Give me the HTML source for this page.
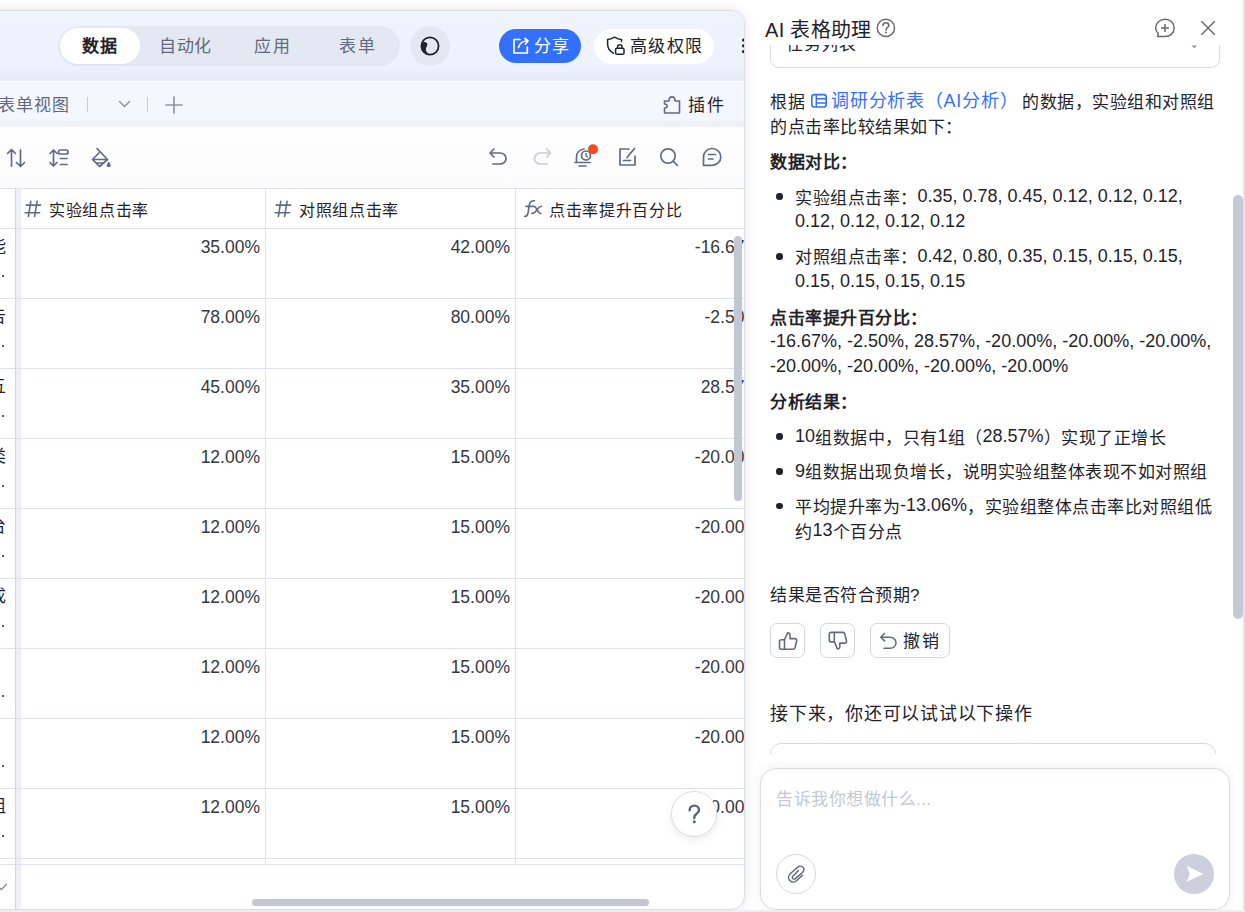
<!DOCTYPE html>
<html lang="zh-CN"><head><meta charset="utf-8">
<style>
*{box-sizing:border-box;margin:0;padding:0}
html,body{width:1245px;height:912px;overflow:hidden;background:#ffffff;font-family:"Liberation Sans",sans-serif;color:#1f2329}
.a{position:absolute;white-space:nowrap}
#panel{position:absolute;left:-50px;top:10px;width:795px;height:900px;border:1px solid #dadce6;border-radius:14px;overflow:hidden;background:#fff;box-shadow:0 0 12px rgba(20,20,40,0.10)}
#pin{position:absolute;left:49px;top:-11px;width:1245px;height:912px}
.t{font-size:17px;line-height:25px;letter-spacing:0.5px}
.g{color:#62687e}
svg{position:absolute;overflow:visible}
.ic{fill:none;stroke:#646a85;stroke-width:1.7;stroke-linecap:round;stroke-linejoin:round}
.hl{position:absolute;height:1px;background:#dfe1ea}
.vl{position:absolute;width:1px;background:#dfe1ea}
.l{font-size:18px;position:relative;top:-1.5px;line-height:1;letter-spacing:0}
.num{position:absolute;font-size:17.5px;line-height:25px;text-align:right;white-space:nowrap;color:#35383e}
#ai{position:absolute;left:745px;top:0;width:500px;height:912px}
</style></head><body>

<div id="panel"><div id="pin">
  <!-- header band -->
  <div class="a" style="left:0;top:11px;width:760px;height:70px;background:linear-gradient(#eff3fc 0,#eef2fc 55px,#e6eaf5 70px)"></div>
  <div class="hl" style="left:0;top:81px;width:760px;background:#fdfeff"></div>
  <!-- segmented -->
  <div class="a" style="left:58px;top:26px;width:342px;height:40px;border-radius:20px;background:#e4e8f2"></div>
  <div class="a" style="left:60px;top:28px;width:80px;height:36px;border-radius:18px;background:#fff;box-shadow:0 1px 2px rgba(0,0,0,0.04)"></div>
  <div class="a t" style="left:82px;top:34px;font-weight:bold;color:#1f2329">数据</div>
  <div class="a t g" style="left:159px;top:34px">自动化</div>
  <div class="a t g" style="left:254px;top:34px;letter-spacing:1.5px">应用</div>
  <div class="a t g" style="left:339px;top:34px;letter-spacing:1.5px">表单</div>
  <!-- theme button -->
  <div class="a" style="left:410px;top:26px;width:40px;height:40px;border-radius:20px;background:#e4e8f2"></div>
  <svg style="left:0;top:0" width="1" height="1"><circle cx="430" cy="46" r="8.6" fill="none" stroke="#1f2329" stroke-width="1.8"/><path d="M421.4 45.5 C421.3 43.2 423 41.8 424.9 42 C426.7 42.2 427.8 43.9 427.2 45.6 C426.7 47 425.6 48.2 425.9 50.1 C426.1 51.5 427.1 52.6 428.6 53.4 C424.6 53.2 421.6 50 421.4 45.5 Z" fill="#1f2329"/></svg>
  <!-- share -->
  <div class="a" style="left:499px;top:29px;width:82px;height:34px;border-radius:17px;background:#3370ff"></div>
  <svg style="left:0;top:0" width="1" height="1"><path d="M520 39.5 H514 V53 H527.3 V47" fill="none" stroke="#fff" stroke-width="1.7" stroke-linecap="round" stroke-linejoin="round"/><path d="M518.5 47.5 C519.5 43.5 522.5 41 527.5 41 M525 38.5 L528 41 L525.5 44" fill="none" stroke="#fff" stroke-width="1.7" stroke-linecap="round" stroke-linejoin="round"/></svg>
  <div class="a t" style="left:534px;top:34px;color:#fff">分享</div>
  <!-- permission -->
  <div class="a" style="left:594px;top:29px;width:120px;height:35px;border-radius:17.5px;background:#fff"></div>
  <svg style="left:0;top:0" width="1" height="1"><path d="M613.5 53.3 C609.5 51 607.6 48 607.6 44 V39.5 C610.5 39.5 612.5 38.5 614.6 37.2 C616.6 38.5 619 39.5 621.5 39.5 V41.5" fill="none" stroke="#1f2329" stroke-width="1.5" stroke-linecap="round" stroke-linejoin="round"/><rect x="615.6" y="48.3" width="8.4" height="6" rx="1.3" fill="none" stroke="#1f2329" stroke-width="1.5"/><path d="M617.6 48.3 V46.5 C617.6 44 622 44 622 46.5 V48.3" fill="none" stroke="#1f2329" stroke-width="1.5"/></svg>
  <div class="a t" style="left:630px;top:34px;letter-spacing:1.3px">高级权限</div>
  <!-- kebab -->
  <svg style="left:0;top:0" width="1" height="1"><circle cx="743.5" cy="40" r="1.6" fill="#1f2329"/><circle cx="743.5" cy="45.8" r="1.6" fill="#1f2329"/><circle cx="743.5" cy="51.6" r="1.6" fill="#1f2329"/></svg>

  <!-- view bar -->
  <div class="a" style="left:0;top:82px;width:760px;height:45px;background:linear-gradient(#f4f7fd 0,#f4f7fd 36px,#eceef4 44px,#f4f5f8 45px)"></div>
  <div class="a t g" style="left:-2px;top:93px;letter-spacing:1px">表单视图</div>
  <div class="vl" style="left:87px;top:97px;height:15px;background:#c9ccd6"></div>
  <svg style="left:0;top:0" width="1" height="1"><path class="ic" style="stroke:#8f95a3;stroke-width:1.5" d="M119.5 101.5 L124.5 106.5 L129.5 101.5"/></svg>
  <div class="vl" style="left:147px;top:97px;height:15px;background:#c9ccd6"></div>
  <svg style="left:0;top:0" width="1" height="1"><path class="ic" style="stroke:#8f95a3;stroke-width:1.7" d="M174 97 V113 M166 105 H182"/></svg>
  <svg style="left:0;top:0" width="1" height="1"><path class="ic" style="stroke-width:1.6" d="M664.5 101 H669 C669 95.5 675 95.5 675 101 H679.5 V113 H664.5 V108 C668 108 668 104 664.5 104 Z"/></svg>
  <div class="a t" style="left:688px;top:93px;letter-spacing:1.5px">插件</div>

  <!-- toolbar -->
  <div class="a" style="left:0;top:127px;width:760px;height:61px;background:linear-gradient(#fefefe 0,#fdfdfe 30px,#fbfbfd 61px)"></div>
  <svg style="left:0;top:0" width="1" height="1">
    <path class="ic" d="M11.5 166 V149.5 M7.5 153.5 L11.5 149.5 L15.5 153.5 M20.5 150 V166.5 M16.5 162.5 L20.5 166.5 L24.5 162.5"/>
    <path class="ic" d="M53.5 150 V166 M50 153.5 L53.5 150 L57 153.5 M50 162.5 L53.5 166 L57 162.5 M60.5 150 H66 A1.5 1.5 0 0 1 66 154 H60.5 A1.5 1.5 0 0 1 60.5 150 Z M60.5 158.5 H67 M60.5 164.5 H67"/>
    <path class="ic" d="M97 148.5 L107.5 159.5 L99.5 166.5 L92.5 159.5 L99 153 M93 159.5 H107 M96.5 163 H104"/>
    <path d="M108.7 161.5 C107.2 163.5 106.5 165 106.7 166 C107 167.3 110.4 167.3 110.7 166 C110.9 165 110.2 163.5 108.7 161.5 Z" fill="#646a85"/>
  </svg>
  <svg style="left:0;top:0" width="1" height="1">
    <path class="ic" d="M494 149 L490 153 L494 157 M490.5 153 H500 C503.5 153 506 155.5 506 158.5 C506 161.5 503.5 164 500 164 H493"/>
    <path class="ic" style="stroke:#c9ccd6" d="M546.5 149 L550.5 153 L546.5 157 M550 153 H540.5 C537 153 534.5 155.5 534.5 158.5 C534.5 161.5 537 164 540.5 164 H547.5"/>
    <path class="ic" d="M584 149 C579 149.5 576.5 153 576.5 157 V162.5 H575 M575 162.5 H590 M579 166 H586"/>
    <circle class="ic" cx="586" cy="155.5" r="4.5"/><path class="ic" style="stroke-width:1.4" d="M586 153.5 V156 L587.8 157"/>
    <circle cx="593" cy="149.3" r="5" fill="#f54a1f"/>
    <path class="ic" d="M629 149 H620 V165 H635 V156 M623.5 160.5 H630.5 M634.5 148.5 L627 157.5"/>
    <circle class="ic" cx="668" cy="156" r="7.2"/><path class="ic" d="M673.3 161.3 L677.5 165.5"/>
    <path class="ic" d="M712 148.5 C716.8 148.5 720.8 152.3 720.8 157 C720.8 161.7 716.8 165.3 712 165.3 H703.5 V157 C703.5 152.3 707.3 148.5 712 148.5 Z M708.5 154.5 H715.5 M708.5 159 H713"/>
  </svg>

  <!-- table -->
  <div class="a" style="left:16px;top:188px;width:5px;height:722px;background:#eff0f5"></div>
  <div class="hl" style="left:0;top:188px;width:760px"></div>
  <div class="hl" style="left:0;top:228px;width:760px"></div>
  <div class="hl" style="left:0;top:298px;width:760px"></div>
  <div class="hl" style="left:0;top:368px;width:760px"></div>
  <div class="hl" style="left:0;top:438px;width:760px"></div>
  <div class="hl" style="left:0;top:508px;width:760px"></div>
  <div class="hl" style="left:0;top:578px;width:760px"></div>
  <div class="hl" style="left:0;top:648px;width:760px"></div>
  <div class="hl" style="left:0;top:718px;width:760px"></div>
  <div class="hl" style="left:0;top:788px;width:760px"></div>
  <div class="hl" style="left:0;top:858px;width:760px"></div>
  <div class="hl" style="left:0;top:864px;width:760px"></div>
  <div class="vl" style="left:15px;top:188px;height:722px;background:#d3d6e2"></div>
  <div class="vl" style="left:265px;top:188px;height:676px"></div>
  <div class="vl" style="left:515px;top:188px;height:676px"></div>

  <!-- header -->
  <svg style="left:0;top:0" width="1" height="1"><path class="ic" style="stroke-width:1.6" d="M30.8 201.3 L28.4 216.4 M37.1 201.3 L34.6 216.4 M26.2 205.1 H40.6 M25.1 212.7 H39.6"/></svg>
  <div class="a" style="left:49px;top:198.5px;font-size:16px;letter-spacing:0.7px;line-height:24px">实验组点击率</div>
  <svg style="left:0;top:0" width="1" height="1"><path class="ic" style="stroke-width:1.6" d="M280.8 201.3 L278.4 216.4 M287.1 201.3 L284.6 216.4 M276.2 205.1 H290.6 M275.1 212.7 H289.6"/></svg>
  <div class="a" style="left:299px;top:198.5px;font-size:16px;letter-spacing:0.7px;line-height:24px">对照组点击率</div>
  <svg style="left:0;top:0" width="1" height="1"><path class="ic" style="stroke-width:1.6" d="M534.5 200.7 C531.5 200.5 529.8 202 529.3 205 L528 213 C527.5 215.5 526 216.5 524.6 216.3 M526 206.4 H534 C535.5 206.5 536.3 208 537 209.5 L538.5 212 C539 213 539.7 213.4 540.8 213.4 M541.5 206.3 C540 206.3 538.8 207.3 537.5 209 L535 212.3 C534.3 213.2 533.3 213.5 531.8 213.4"/></svg>
  <div class="a" style="left:549px;top:198.5px;font-size:16px;letter-spacing:0.7px;line-height:24px">点击率提升百分比</div>

  <!-- frozen col partial chars -->
  <div class="a t" style="left:-11px;top:234px">能</div><div class="a" style="left:2px;top:275px;width:2px;height:2px;background:#2a2e36;border-radius:1px"></div>
  <div class="a t" style="left:-11px;top:304px">告</div><div class="a" style="left:2px;top:345px;width:2px;height:2px;background:#2a2e36;border-radius:1px"></div>
  <div class="a t" style="left:-11px;top:374px">五</div><div class="a" style="left:2px;top:415px;width:2px;height:2px;background:#2a2e36;border-radius:1px"></div>
  <div class="a t" style="left:-11px;top:444px">类</div><div class="a" style="left:2px;top:485px;width:2px;height:2px;background:#2a2e36;border-radius:1px"></div>
  <div class="a t" style="left:-11px;top:514px">台</div><div class="a" style="left:2px;top:555px;width:2px;height:2px;background:#2a2e36;border-radius:1px"></div>
  <div class="a t" style="left:-11px;top:584px">成</div><div class="a" style="left:2px;top:625px;width:2px;height:2px;background:#2a2e36;border-radius:1px"></div>
  <div class="a" style="left:2px;top:695px;width:2px;height:2px;background:#2a2e36;border-radius:1px"></div>
  <div class="a" style="left:2px;top:765px;width:2px;height:2px;background:#2a2e36;border-radius:1px"></div>
  <div class="a t" style="left:-11px;top:794px">组</div><div class="a" style="left:2px;top:835px;width:2px;height:2px;background:#2a2e36;border-radius:1px"></div>
  <svg style="left:0;top:0" width="1" height="1"><path d="M-1 887.5 L1.5 889.5 L6.5 884.3" fill="none" stroke="#8a90a0" stroke-width="1.5" stroke-linecap="round"/></svg>

  <!-- rows -->
  <div class="num" style="right:985px;top:235px">35.00%</div><div class="num" style="right:735px;top:235px">42.00%</div><div class="num" style="right:485px;top:235px">-16.67%</div>
<div class="num" style="right:985px;top:305px">78.00%</div><div class="num" style="right:735px;top:305px">80.00%</div><div class="num" style="right:485px;top:305px">-2.50%</div>
<div class="num" style="right:985px;top:375px">45.00%</div><div class="num" style="right:735px;top:375px">35.00%</div><div class="num" style="right:485px;top:375px">28.57%</div>
<div class="num" style="right:985px;top:445px">12.00%</div><div class="num" style="right:735px;top:445px">15.00%</div><div class="num" style="right:485px;top:445px">-20.00%</div>
<div class="num" style="right:985px;top:515px">12.00%</div><div class="num" style="right:735px;top:515px">15.00%</div><div class="num" style="right:485px;top:515px">-20.00%</div>
<div class="num" style="right:985px;top:585px">12.00%</div><div class="num" style="right:735px;top:585px">15.00%</div><div class="num" style="right:485px;top:585px">-20.00%</div>
<div class="num" style="right:985px;top:655px">12.00%</div><div class="num" style="right:735px;top:655px">15.00%</div><div class="num" style="right:485px;top:655px">-20.00%</div>
<div class="num" style="right:985px;top:725px">12.00%</div><div class="num" style="right:735px;top:725px">15.00%</div><div class="num" style="right:485px;top:725px">-20.00%</div>
<div class="num" style="right:985px;top:795px">12.00%</div><div class="num" style="right:735px;top:795px">15.00%</div><div class="num" style="right:485px;top:795px">-20.00%</div>


  <!-- scrollbars -->
  <div class="a" style="left:734px;top:236px;width:8px;height:265px;border-radius:4px;background:#c3c7d4"></div>
  <div class="a" style="left:252px;top:899px;width:397px;height:7px;border-radius:3.5px;background:#c3c7d4"></div>
  <!-- help button -->
  <div class="a" style="left:671px;top:791px;width:46px;height:46px;border-radius:23px;background:#fff;border:1px solid #dcdde3;box-shadow:0 3px 8px rgba(0,0,0,0.08)"></div>
  <svg style="left:0;top:0" width="1" height="1"><path d="M689.6 810.3 C689.6 807.4 691.7 805.6 694.3 805.6 C697 805.6 699 807.5 699 810 C699 812.6 696.6 813.5 695.2 815.1 C694.5 815.9 694.3 816.8 694.3 818" fill="none" stroke="#5c6380" stroke-width="2.4" stroke-linecap="round"/><circle cx="694.3" cy="821.8" r="1.5" fill="#5c6380"/></svg>
</div></div>

<div id="ai">
  <div class="a" style="left:20px;top:16px;font-size:20px;line-height:28px;color:#1f2329;letter-spacing:0.3px">AI 表格助理</div>
  <svg style="left:-745px;top:0" width="1" height="1">
    <circle cx="885.9" cy="27.9" r="8.6" fill="none" stroke="#6a6a6a" stroke-width="1.5"/>
    <path d="M883 25.5 C883 23.8 884.3 22.8 885.9 22.8 C887.6 22.8 888.8 23.9 888.8 25.4 C888.8 27.3 886 27.8 886 30" fill="none" stroke="#6a6a6a" stroke-width="1.6" stroke-linecap="round"/>
    <circle cx="886" cy="32.5" r="1" fill="#6a6a6a"/>
    <path d="M1157.5 36.6 L1158.3 33.5 C1156.5 31.7 1155.7 30 1155.7 28 C1155.7 23 1159.8 19.3 1165 19.3 C1170.2 19.3 1174.2 23 1174.2 28 C1174.2 33 1170.2 36.6 1165 36.6 Z M1165 24 V32 M1161 28 H1169" fill="none" stroke="#6a6a6a" stroke-width="1.5" stroke-linejoin="round"/>
    <path d="M1201.3 21.3 L1214.8 34.8 M1214.8 21.3 L1201.3 34.8" fill="none" stroke="#6a6a6a" stroke-width="1.5"/>
  </svg>
  <!-- scroll area -->
  <div class="a" style="left:0;top:45px;width:487px;height:709px;overflow:hidden">
   <div class="a" style="left:-745px;top:-45px;width:1245px;height:912px">
    <div class="a" style="left:770px;top:-10px;width:450px;height:78px;border:1px solid #d6d9e3;border-radius:9px"></div>
    <div class="a t" style="left:786px;top:32px">任务列表</div>
    <svg style="left:0;top:0" width="1" height="1"><path d="M1191.5 45.5 L1197 45.5 L1194.2 48.3 Z" fill="#8f95a3"/></svg>

    <div class="a t" style="left:770px;top:89.5px">根据</div>
    <svg style="left:0;top:0" width="1" height="1"><rect x="811.8" y="94.6" width="14.4" height="12.4" rx="2.6" fill="none" stroke="#3370ff" stroke-width="1.6"/><path d="M816.3 94.6 V107 M816.3 98.8 H826.2 M816.3 102.9 H826.2" fill="none" stroke="#3370ff" stroke-width="1.5"/></svg>
    <div class="a t" style="left:831px;top:89px;color:#3370ff;font-size:18px;letter-spacing:0.75px">调研分析表（AI分析）</div>
    <div class="a t" style="left:1022px;top:89.5px">的数据，实验组和对照组</div>
    <div class="a t" style="left:770px;top:114.5px">的点击率比较结果如下：</div>

    <div class="a t" style="left:770px;top:150.3px;font-weight:bold">数据对比：</div>
    <div class="a" style="left:776px;top:193px;width:6.5px;height:6.5px;border-radius:50%;background:#1f2329"></div>
    <div class="a t" style="left:795px;top:185.5px">实验组点击率：<span class="l">0.35, 0.78, 0.45, 0.12, 0.12, 0.12,</span><br><span class="l">0.12, 0.12, 0.12, 0.12</span></div>
    <div class="a" style="left:776px;top:253px;width:6.5px;height:6.5px;border-radius:50%;background:#1f2329"></div>
    <div class="a t" style="left:795px;top:245.3px">对照组点击率：<span class="l">0.42, 0.80, 0.35, 0.15, 0.15, 0.15,</span><br><span class="l">0.15, 0.15, 0.15, 0.15</span></div>

    <div class="a t" style="left:770px;top:305.5px;font-weight:bold">点击率提升百分比：</div>
    <div class="a t" style="left:770px;top:330.6px"><span class="l">-16.67%, -2.50%, 28.57%, -20.00%, -20.00%, -20.00%,</span><br><span class="l">-20.00%, -20.00%, -20.00%, -20.00%</span></div>

    <div class="a t" style="left:770px;top:390.3px;font-weight:bold">分析结果：</div>
    <div class="a" style="left:776px;top:433px;width:6.5px;height:6.5px;border-radius:50%;background:#1f2329"></div>
    <div class="a t" style="left:795px;top:425.5px"><span class="l">10</span>组数据中，只有<span class="l">1</span>组（<span class="l">28.57%</span>）实现了正增长</div>
    <div class="a" style="left:776px;top:468px;width:6.5px;height:6.5px;border-radius:50%;background:#1f2329"></div>
    <div class="a t" style="left:795px;top:460.2px"><span class="l">9</span>组数据出现负增长，说明实验组整体表现不如对照组</div>
    <div class="a" style="left:776px;top:502.5px;width:6.5px;height:6.5px;border-radius:50%;background:#1f2329"></div>
    <div class="a t" style="left:795px;top:494.9px">平均提升率为<span class="l">-13.06%</span>，实验组整体点击率比对照组低<br>约<span class="l">13</span>个百分点</div>

    <div class="a t" style="left:770px;top:583px">结果是否符合预期?</div>
    <div class="a" style="left:770px;top:623px;width:35px;height:35px;border:1px solid #d3d6e0;border-radius:7px"></div>
    <div class="a" style="left:820px;top:623px;width:35px;height:35px;border:1px solid #d3d6e0;border-radius:7px"></div>
    <div class="a" style="left:870px;top:623px;width:80px;height:35px;border:1px solid #d3d6e0;border-radius:7px"></div>
    <svg style="left:0;top:0" width="1" height="1">
      <path d="M784.5 649.3 V639.8 L787.6 632.8 C789 632.6 790 633.6 790 635 V638.6 H795 C796.2 638.6 797 639.6 796.7 640.8 L795 647.8 C794.7 648.8 794 649.3 793 649.3 Z M784.5 649.3 H781.3 C780.2 649.3 779.5 648.6 779.5 647.6 V641.5 C779.5 640.5 780.2 639.8 781.3 639.8 H784.5" fill="none" stroke="#646a80" stroke-width="1.6" stroke-linejoin="round"/>
      <path d="M834.3 632.4 V641.9 L837.4 648.9 C838.8 649.1 839.8 648.1 839.8 646.7 V643.1 H844.8 C846 643.1 846.8 642.1 846.5 640.9 L844.8 633.9 C844.5 632.9 843.8 632.4 842.8 632.4 Z M834.3 632.4 H831.1 C830 632.4 829.3 633.1 829.3 634.1 V640.2 C829.3 641.2 830 641.9 831.1 641.9 H834.3" fill="none" stroke="#646a80" stroke-width="1.6" stroke-linejoin="round"/>
      <path d="M884.5 633.5 L880.8 637.2 L884.5 640.9 M881.2 637.2 H890 C893.5 637.2 896 639.7 896 642.8 C896 645.9 893.5 648.3 890 648.3 H884" fill="none" stroke="#646a80" stroke-width="1.6" stroke-linecap="round" stroke-linejoin="round"/>
    </svg>
    <div class="a t" style="left:903px;top:628.5px;letter-spacing:1.5px">撤销</div>

    <div class="a t" style="left:770px;top:702px;font-size:18px;letter-spacing:0.75px">接下来，你还可以试试以下操作</div>
    <div class="a" style="left:770px;top:743px;width:446px;height:60px;border:1px solid #d6d9e3;border-radius:11px"></div>
   </div>
  </div>
  <!-- input -->
  <div class="a" style="left:15px;top:768px;width:470px;height:142px;border:1px solid #d9dbe4;border-radius:16px;background:#fff;box-shadow:0 0 12px rgba(0,0,0,0.07)"></div>
  <div class="a t" style="left:31px;top:786.5px;color:#c5c8d3">告诉我你想做什么...</div>
  <div class="a" style="left:31px;top:854px;width:40px;height:40px;border:1px solid #d6d9e3;border-radius:50%"></div>
  <svg style="left:-745px;top:0" width="1" height="1"><path d="M802.5 875.3 L796.5 880.8 C794.5 882.6 791.5 882.4 789.8 880.6 C788 878.7 788.2 875.7 790.2 873.8 L797.5 867.2 C799.2 865.6 801.7 865.8 803 867.3 C804.3 868.8 804 871 802.4 872.5 L795.4 878.6 C794.5 879.4 793.3 879.3 792.7 878.6 C792 877.8 792.2 876.7 793 876 L798.5 870.5" fill="none" stroke="#5c6278" stroke-width="1.4" stroke-linecap="round"/></svg>
  <div class="a" style="left:429px;top:854px;width:40px;height:40px;border-radius:50%;background:#cdd0dc"></div>
  <svg style="left:-745px;top:0" width="1" height="1"><path d="M1187 866 L1203.3 874 L1187 881.8 L1189.7 874 Z" fill="#fff"/></svg>
  <!-- scrollbar -->
  <div class="a" style="left:488px;top:195px;width:10px;height:424px;border-radius:5px;background:#c5c9d6"></div>
</div>
<div class="a" style="left:1243px;top:0;width:2px;height:912px;background:#dde3f8"></div>
<div class="a" style="left:0;top:910px;width:1245px;height:2px;background:#eeeef0"></div>
</body></html>
